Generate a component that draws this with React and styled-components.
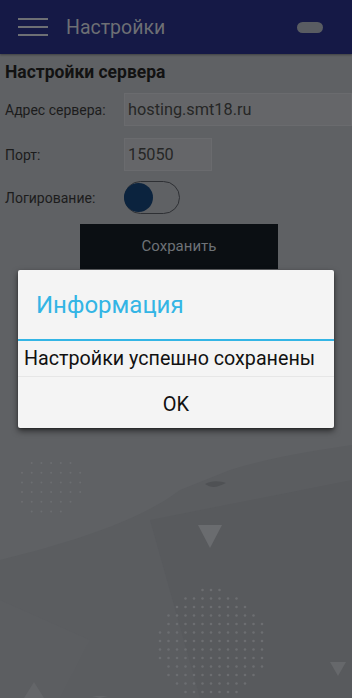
import React from "react";
import styled, { createGlobalStyle } from "styled-components";

const Global = createGlobalStyle`
  html, body { margin: 0; padding: 0; height: 100%; }
  body { background: #5f6164; font-family: Roboto, "Noto Sans", sans-serif; overflow: hidden; }
  #root { min-height: 100%; }
`;

const Screen = styled.div`
  position: relative;
  width: 352px;
  height: 698px;
  background: #5f6164;
  overflow: hidden;
`;

const Backdrop = styled.svg`
  position: absolute;
  left: 0;
  top: 0;
  width: 352px;
  height: 698px;
  z-index: 0;
`;

const Page = styled.div`
  position: relative;
  z-index: 1;
  display: flex;
  flex-direction: column;
`;

const AppBar = styled.header`
  height: 54px;
  background: #151946;
  display: flex;
  align-items: center;
  padding: 0 29px 0 18px;
  box-shadow: 0 1px 2px rgba(0, 0, 0, 0.35);
`;

const Burger = styled.div`
  width: 30px;
  height: 18px;
  display: flex;
  flex-direction: column;
  justify-content: space-between;
  margin-right: 18px;
  span {
    display: block;
    height: 2px;
    background: #6d6f74;
  }
`;

const Title = styled.h1`
  flex: 1;
  margin: 0;
  font-size: 19.5px;
  font-weight: 400;
  color: #6d6f74;
  line-height: 1;
  padding-top: 1px;
`;

const Pill = styled.div`
  width: 26px;
  height: 11px;
  border-radius: 6px;
  background: #595c62;
`;

const Content = styled.main`
  display: flex;
  flex-direction: column;
  padding: 0 0 0 5px;
`;

const Heading = styled.h2`
  margin: 0;
  height: 34px;
  display: flex;
  align-items: center;
  font-size: 17.5px;
  font-weight: 700;
  color: #121212;
  padding-top: 1px;
`;

const Row = styled.div`
  display: grid;
  grid-template-columns: 119px 1fr;
  align-items: center;
  margin-top: ${(p) => p.$gap}px;
`;

const Label = styled.span`
  font-size: 14px;
  color: #1c1c1c;
`;

const Field = styled.div`
  height: ${(p) => p.$h}px;
  width: ${(p) => (p.$w ? `${p.$w}px` : "auto")};
  box-sizing: border-box;
  background: #656669;
  border: 1px solid #6a6b6e;
  display: flex;
  align-items: center;
  padding-left: 3px;
  font-size: 16.3px;
  color: #262626;
`;

const Switch = styled.div`
  width: 56px;
  height: 33px;
  box-sizing: border-box;
  border: 1px solid #2e3034;
  border-radius: 17px;
  display: flex;
  align-items: center;
`;

const Thumb = styled.div`
  width: 29px;
  height: 29px;
  border-radius: 50%;
  background: #0b233e;
  margin-left: -1px;
`;

const SaveButton = styled.button`
  align-self: flex-start;
  margin: 10px 0 0 75px;
  width: 198px;
  height: 45px;
  border: none;
  background: #0b0f13;
  color: #6e7277;
  font-family: Roboto, sans-serif;
  font-size: 15px;
  padding: 0 0 1px;
`;

const Overlay = styled.div`
  position: absolute;
  inset: 0;
  z-index: 2;
  display: flex;
  align-items: center;
  justify-content: center;
`;

const Dialog = styled.div`
  width: 316px;
  margin-top: -1px;
  background: #f4f4f4;
  border-radius: 2px;
  box-shadow: 0 3px 6px rgba(0, 0, 0, 0.55), 0 1px 2px rgba(0, 0, 0, 0.3);
  display: flex;
  flex-direction: column;
`;

const DialogTitle = styled.div`
  height: 71px;
  display: flex;
  align-items: center;
  padding: 2px 0 0 18px;
  box-sizing: border-box;
  font-size: 24px;
  color: #33b5e5;
  border-bottom: 2px solid #33b5e5;
`;

const Message = styled.div`
  height: 35px;
  display: flex;
  align-items: center;
  padding-left: 6px;
  font-size: 19.7px;
  color: #111;
  border-bottom: 1px solid #e6e6e6;
`;

const OkButton = styled.button`
  height: 51px;
  border: none;
  background: transparent;
  font-family: Roboto, sans-serif;
  font-size: 20px;
  color: #111;
  padding: 3px 0 0;
`;

function Dots({ x, y, cols, rows, step, r, cx, cy, rad }) {
  const out = [];
  for (let i = 0; i < cols; i++) {
    for (let j = 0; j < rows; j++) {
      const px = x + i * step;
      const py = y + j * step;
      if (rad && Math.hypot(px - cx, py - cy) > rad) continue;
      out.push(<circle key={`${i}-${j}`} cx={px} cy={py} r={r} />);
    }
  }
  return <g fill="#6c6e71">{out}</g>;
}

export default function App() {
  return (
    <>
      <Global />
      <Screen>
        <Backdrop viewBox="0 0 352 698">
          <path d="M0 560 C 80 540 140 520 180 490 L 230 470 C 280 455 320 450 352 445 L 352 698 L 0 698 Z" fill="#5b5d60" />
          <path d="M150 520 L 352 480 L 352 698 L 200 698 Z" fill="#585a5d" />
          <path d="M0 600 L 90 640 L 60 698 L 0 698 Z" fill="#5c5e61" />
          <path d="M205 484 C 212 480 220 481 226 483 C 218 487 212 489 205 484 Z" fill="#4f5154" />
          <path d="M198 525 L 222 525 L 210 548 Z" fill="#6a6c6f" />
          <path d="M330 662 L 346 662 L 338 676 Z" fill="#66686b" />
          <path d="M34 682 L 44 698 L 24 698 Z" fill="#646669" />
          <path d="M92 696 L 108 696 L 100 698 Z" fill="#646669" />
          <Dots x={22} y={463} cols={7} rows={6} step={9.7} r={1} cx={50} cy={483} rad={34} />
          <Dots x={160} y={590} cols={13} rows={13} step={8.5} r={1.3} cx={212} cy={645} rad={56} />
        </Backdrop>
        <Page>
          <AppBar>
            <Burger>
              <span />
              <span />
              <span />
            </Burger>
            <Title>Настройки</Title>
            <Pill />
          </AppBar>
          <Content>
            <Heading>Настройки сервера</Heading>
            <Row $gap={4}>
              <Label>Адрес сервера:</Label>
              <Field $h={33}>hosting.smt18.ru</Field>
            </Row>
            <Row $gap={12}>
              <Label>Порт:</Label>
              <Field $h={33} $w={88}>15050</Field>
            </Row>
            <Row $gap={10}>
              <Label>Логирование:</Label>
              <Switch>
                <Thumb />
              </Switch>
            </Row>
            <SaveButton>Сохранить</SaveButton>
          </Content>
        </Page>
        <Overlay>
          <Dialog>
            <DialogTitle>Информация</DialogTitle>
            <Message>Настройки успешно сохранены</Message>
            <OkButton>OK</OkButton>
          </Dialog>
        </Overlay>
      </Screen>
    </>
  );
}
